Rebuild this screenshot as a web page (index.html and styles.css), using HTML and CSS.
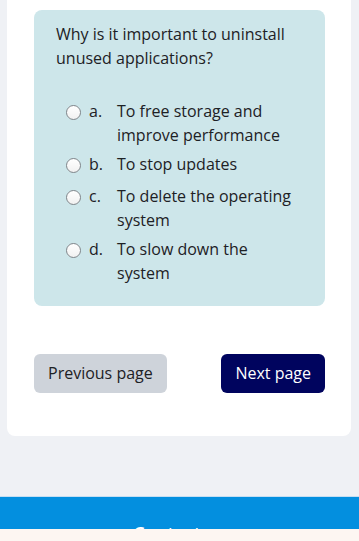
FILE: index.html
```html
<!DOCTYPE html>
<html lang="en">
<head>
<meta charset="utf-8">
<title>Quiz</title>
<link rel="stylesheet" href="styles.css">
</head>
<body>
<main class="page">
  <section class="card">
    <div class="question">
      <p class="qtext">Why is it important to uninstall unused applications?</p>
      <div class="answers">
        <label class="option">
          <span class="radio"></span>
          <span class="letter">a.</span>
          <span class="atext">To free storage and improve performance</span>
        </label>
        <label class="option">
          <span class="radio"></span>
          <span class="letter">b.</span>
          <span class="atext">To stop updates</span>
        </label>
        <label class="option">
          <span class="radio"></span>
          <span class="letter">c.</span>
          <span class="atext">To delete the operating system</span>
        </label>
        <label class="option">
          <span class="radio"></span>
          <span class="letter">d.</span>
          <span class="atext">To slow down the system</span>
        </label>
      </div>
    </div>
    <div class="nav">
      <button class="btn btn-prev">Previous page</button>
      <button class="btn btn-next">Next page</button>
    </div>
  </section>
</main>
<footer class="footer">
  <div class="footer-title">Contact us</div>
</footer>
<div class="notice"></div>
</body>
</html>
```
FILE: styles.css
```css
* { box-sizing: border-box; }
html, body { margin: 0; padding: 0; }
body {
  background: #eff1f5;
  font-family: "Open Sans", "Noto Sans", sans-serif;
  color: #1d2125;
  overflow: hidden;
}
.page {
  padding: 0 8px 60px 7px;
}
.card {
  background: #ffffff;
  border-radius: 0 0 8px 8px;
  padding: 10px 26px 43px 27px;
}
.question {
  background: #cde6ea;
  border-radius: 8px;
  padding: 12px 22px 21px 22px;
}
.qtext {
  margin: 0 0 29px 0;
  font-size: 16px;
  line-height: 24px;
}
.answers {
  display: flex;
  flex-direction: column;
  gap: 5px;
  padding-left: 10px;
}
.option {
  display: flex;
  align-items: flex-start;
  font-size: 16px;
  line-height: 24px;
}
.radio {
  flex: none;
  width: 15px;
  height: 15px;
  margin: 6px 8px 6px 0;
  border: 1px solid #80858a;
  border-radius: 50%;
  background: linear-gradient(#ffffff, #f1f1f1);
}
.letter {
  flex: none;
  width: 28px;
}
.atext {
  flex: 1;
}
.nav {
  display: flex;
  justify-content: space-between;
  margin-top: 48px;
}
.btn {
  font-family: "Open Sans", "Noto Sans", sans-serif;
  font-size: 16px;
  line-height: 24px;
  height: 39px;
  padding: 7px 14px 8px;
  border: none;
  border-radius: 6px;
}
.btn-prev {
  background: #ced3da;
  color: #1d2125;
}
.btn-next {
  background: #00045e;
  color: #ffffff;
}
.footer {
  border-top: 1px solid #c5def2;
  background: #038fdf;
  height: 60px;
  padding-top: 24px;
  text-align: center;
}
.footer-title {
  color: #ffffff;
  font-size: 18px;
  line-height: 24px;
  font-weight: 600;
}
.notice {
  position: fixed;
  left: 0;
  right: 0;
  bottom: 0;
  height: 12px;
  background: #fdf6f2;
}
```
